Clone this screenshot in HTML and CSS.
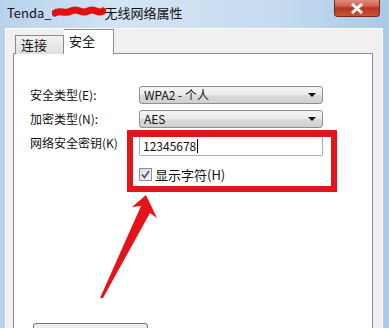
FILE: index.html
```html
<!DOCTYPE html>
<html>
<head>
<meta charset="utf-8">
<link rel="stylesheet" href="styles.css">
</head>
<body>
<div class="window">
  <div class="titlebar">
    <span class="title">Tenda_<span class="mask"><svg width="54" height="14" viewBox="0 0 54 14"><path d="M3 8 C8 4,13 10,19 6 S30 10,36 6 S46 10,51 6" stroke="#e01010" stroke-width="7" fill="none" stroke-linecap="round"/></svg></span>无线网络属性</span>
    <div class="close"><svg width="14" height="11" viewBox="0 0 14 11"><path d="M2 1 L12 10 M12 1 L2 10" stroke="#fff" stroke-width="3"/></svg></div>
  </div>
  <div class="client">
    <div class="tabs">
      <div class="tab">连接</div>
      <div class="tab active">安全</div>
    </div>
    <div class="panel">
      <div class="form">
        <div class="lbl">安全类型(E):</div>
        <div class="combo"><span>WPA2 - 个人</span><i class="arrow"></i></div>
        <div class="lbl">加密类型(N):</div>
        <div class="combo"><span>AES</span><i class="arrow"></i></div>
        <div class="lbl">网络安全密钥(K)</div>
        <div class="input">12345678<i class="caret"></i></div>
        <div class="check">
          <span class="box"><svg width="9" height="9" viewBox="0 0 9 9"><path d="M1 4.5 L3.5 7.5 L8 1" stroke="#4a5f86" stroke-width="1.8" fill="none"/></svg></span>
          <span>显示字符(H)</span>
        </div>
      </div>
      <div class="btn"></div>
    </div>
  </div>
  <div class="redbox"></div>
  <svg class="arrowmark" width="60" height="110" viewBox="0 0 60 110"><path d="M47 1 L58 24 L51 19 L4 104 L1 104 L42 12 L33 13 Z" fill="#e3141a"/></svg>
</div>
</body>
</html>
```
FILE: styles.css
```css
html, body { margin: 0; padding: 0; }
body {
  width: 389px;
  height: 328px;
  overflow: hidden;
  font-family: "Noto Sans CJK SC", "Noto Sans", sans-serif;
}
.window {
  position: relative;
  width: 389px;
  height: 328px;
  background: linear-gradient(90deg, #b7d2ec 0%, #d3e4f4 30%, #c8dcf0 70%, #a9c8e6 100%);
  display: flex;
  flex-direction: column;
}
.titlebar {
  height: 28px;
  position: relative;
  flex: none;
}
.title {
  position: absolute;
  left: 7px;
  top: 4px;
  font-size: 13px;
  line-height: 18px;
  color: #111;
  display: flex;
  align-items: center;
  white-space: nowrap;
}
.mask {
  display: inline-block;
  width: 53px;
  height: 14px;
  margin-top: -2px;
}
.mask svg { display: block; }
.close {
  position: absolute;
  left: 334px;
  top: -2px;
  width: 46px;
  height: 19px;
  border: 1px solid #6b2a22;
  border-top: none;
  border-radius: 0 0 4px 4px;
  background: linear-gradient(#e69a8d 0%, #d0614f 45%, #b83520 55%, #c9543a 100%);
  display: flex;
  align-items: center;
  justify-content: center;
  box-sizing: border-box;
  padding-top: 2px;
}
.client {
  flex: 1;
  margin: 0 6px 0 5px;
  background: #f0f0f0;
  border: 1px solid #fcfdfe;
  border-bottom: none;
  padding: 1px 9px 0 7px;
  display: flex;
  flex-direction: column;
}
.tabs {
  display: flex;
  align-items: flex-end;
  height: 24px;
  padding-left: 2px;
  margin-bottom: -1px;
  position: relative;
  z-index: 1;
}
.tab {
  font-size: 13px;
  line-height: 17px;
  height: 18px;
  padding: 0 0 0 5px;
  width: 42px;
  border: 1px solid #898c95;
  border-bottom: none;
  background: linear-gradient(#f2f2f2, #e0e0e0);
  color: #111;
}
.tab.active {
  height: 24px;
  width: 44px;
  background: #fff;
  border-left: none;
  line-height: 22px;
}
.panel {
  flex: 1;
  background: #fff;
  border: 1px solid #898c95;
  border-bottom: none;
  display: flex;
  flex-direction: column;
}
.form {
  display: grid;
  grid-template-columns: 109px 184px;
  row-gap: 6px;
  padding: 32px 0 0 16px;
  font-size: 12px;
  color: #111;
}
.lbl { line-height: 18px; height: 18px; }
.combo {
  height: 18px;
  box-sizing: border-box;
  border: 1px solid #8e8f8f;
  border-radius: 3px;
  background: linear-gradient(#f5f5f5 0%, #ebebeb 50%, #dcdcdc 51%, #cfcfcf 100%);
  display: flex;
  align-items: center;
  justify-content: space-between;
  padding: 0 6px 0 4px;
  font-size: 12px;
  line-height: 16px;
}
.arrow {
  width: 0;
  height: 0;
  border-left: 4px solid transparent;
  border-right: 4px solid transparent;
  border-top: 4px solid #111;
}
.input {
  margin-top: 2px;
  height: 20px;
  box-sizing: border-box;
  border: 1px solid #abadb3;
  border-top-color: #8b8e94;
  border-radius: 2px;
  padding: 0 3px;
  line-height: 18px;
  font-size: 12px;
  display: flex;
  align-items: center;
}
.caret { width: 1px; height: 14px; background: #000; margin-left: 1px; }
.check {
  grid-column: 2;
  display: flex;
  align-items: center;
  gap: 3px;
  height: 18px;
  margin-top: 3px;
  font-size: 13px;
}
.box {
  width: 13px;
  height: 13px;
  box-sizing: border-box;
  border: 1px solid #8f8f8f;
  background: linear-gradient(135deg, #dcdcdc, #f8f8f8);
  display: flex;
  align-items: center;
  justify-content: center;
}
.btn {
  margin: 140px 0 0 19px;
  width: 115px;
  height: 20px;
  border: 1px solid #707070;
  border-radius: 3px;
  background: #eee;
  box-sizing: border-box;
}
.redbox {
  position: absolute;
  left: 127px;
  top: 130px;
  width: 210px;
  height: 62px;
  box-sizing: border-box;
  border-style: solid;
  border-color: #e3141a;
  border-width: 7px 6px 6px 6px;
}
.arrowmark { position: absolute; left: 99px; top: 194px; }
```
